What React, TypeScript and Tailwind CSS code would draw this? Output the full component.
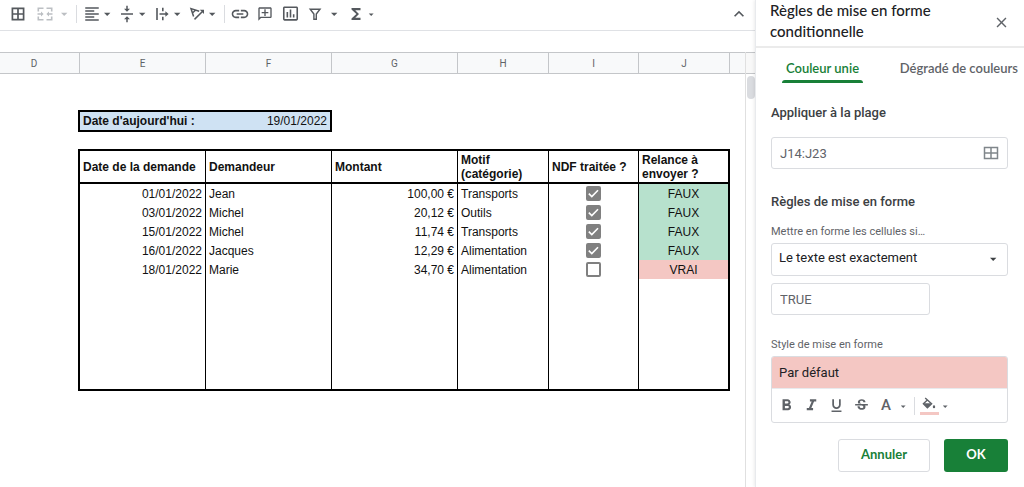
import { useState } from 'react'
import type { ReactNode } from 'react'
import {
  MdClose,
  MdFormatAlignLeft,
  MdFormatBold,
  MdFormatItalic,
  MdFormatUnderlined,
  MdFunctions,
  MdInsertChartOutlined,
  MdKeyboardArrowUp,
  MdLink,
  MdOutlineAddComment,
  MdStrikethroughS,
  MdVerticalAlignCenter,
} from 'react-icons/md'

interface Expense {
  date: string
  name: string
  amount: string
  category: string
  done: boolean
  remind: boolean
}

const EXPENSES: Expense[] = [
  { date: '01/01/2022', name: 'Jean', amount: '100,00 €', category: 'Transports', done: true, remind: false },
  { date: '03/01/2022', name: 'Michel', amount: '20,12 €', category: 'Outils', done: true, remind: false },
  { date: '15/01/2022', name: 'Michel', amount: '11,74 €', category: 'Transports', done: true, remind: false },
  { date: '16/01/2022', name: 'Jacques', amount: '12,29 €', category: 'Alimentation', done: true, remind: false },
  { date: '18/01/2022', name: 'Marie', amount: '34,70 €', category: 'Alimentation', done: false, remind: true },
]

const COLUMNS = [
  { letter: 'D', className: 'w-[80px] pr-[11px]' },
  { letter: 'E', className: 'w-[126px]' },
  { letter: 'F', className: 'w-[126px]' },
  { letter: 'G', className: 'w-[126px]' },
  { letter: 'H', className: 'w-[91px]' },
  { letter: 'I', className: 'w-[90px]' },
  { letter: 'J', className: 'w-[91px]' },
]

function Caret({ className = '' }: { className?: string }) {
  return (
    <svg viewBox="0 0 12 12" className={`h-3 w-3 shrink-0 ${className}`} fill="currentColor">
      <path d="M3 4.7h6.4L6.2 8z" />
    </svg>
  )
}

function SmallCaret() {
  return (
    <svg viewBox="0 0 12 12" className="h-3 w-3 shrink-0" fill="currentColor">
      <path d="M3.8 5.6h4.8L6.2 8.1z" />
    </svg>
  )
}

function GridIcon({ className = '' }: { className?: string }) {
  return (
    <svg viewBox="0 0 18 18" className={className} fill="none" stroke="currentColor" strokeWidth="1.7">
      <path d="M3.4 3.4h11.2v11.2H3.4zM9 3.4v11.2M3.4 9h11.2" />
    </svg>
  )
}

function RangeIcon() {
  return (
    <svg viewBox="0 0 20 20" className="h-5 w-5" fill="none" stroke="currentColor" strokeWidth="1.5">
      <path d="M3.5 4.5h13v11h-13zM10 4.5v11M3.5 10h13" />
    </svg>
  )
}

function MergeIcon() {
  return (
    <svg viewBox="0 0 18 18" className="h-[18px] w-[18px]" fill="none" stroke="currentColor" strokeWidth="1.6">
      <path d="M2.3 6.4V3.3H7.5M10.5 3.3h5.2V6.4M2.3 11.6v3.1H7.5M10.5 14.7h5.2V11.6" />
      <path d="M1.5 9h4.5M16.5 9H12" />
      <path d="M5 6.6 7.6 9 5 11.4zM13 6.6 10.4 9l2.6 2.4z" fill="currentColor" stroke="none" />
    </svg>
  )
}

function WrapIcon() {
  return (
    <svg viewBox="0 0 18 18" className="h-[18px] w-[18px]" fill="none" stroke="currentColor" strokeWidth="1.6">
      <path d="M4 3v12M9.8 2.8v3.4M9.8 11.8v3.4M6.5 9h7.5" />
      <path d="M12.4 6.2 15.6 9l-3.2 2.8z" fill="currentColor" stroke="none" />
    </svg>
  )
}

function RotateIcon() {
  return (
    <svg viewBox="0 0 18 18" className="h-[18px] w-[18px]" fill="none" stroke="currentColor" strokeWidth="1.5">
      <path d="M5.6 11.4 3 3.6l8.2 2.6M4.4 8 7.8 5" />
      <path d="M6.5 14.4 14.2 6.8" />
      <path d="M11.8 4.8h4.2V9z" fill="currentColor" stroke="none" />
    </svg>
  )
}

function FilterIcon() {
  return (
    <svg viewBox="0 0 18 18" className="h-[18px] w-[18px]" fill="none" stroke="currentColor" strokeWidth="1.4">
      <path d="M4.2 4.2h9.8L10.3 9v5.2H7.9V9z" />
    </svg>
  )
}

function FillIcon() {
  return (
    <svg viewBox="0 0 18 14" className="h-[14px] w-[18px]">
      <path d="M5.2 1 11.6 6.8 7.4 10.8 3.4 6.8 7.4 3" fill="none" stroke="currentColor" strokeWidth="1.4" />
      <path d="M3.2 6.2h8.6l-4.4 4.8z" fill="currentColor" />
      <path d="M14 7.8c.8 1 1.2 1.6 1.2 2.2a1.2 1.2 0 0 1-2.4 0c0-.6.4-1.2 1.2-2.2z" fill="currentColor" />
    </svg>
  )
}

function ToolButton({ label, children, className = '' }: { label: string; children: ReactNode; className?: string }) {
  return (
    <button type="button" aria-label={label} className={`flex shrink-0 items-center justify-center ${className}`}>
      {children}
    </button>
  )
}

function Toolbar() {
  return (
    <div className="flex h-[31px] items-center border-b border-[#dfe1e5] pb-[3px] pl-[9px] pr-[6px] text-[#54585d]">
      <ToolButton label="Bordures"><GridIcon className="h-[18px] w-[18px]" /></ToolButton>
      <ToolButton label="Fusionner" className="ml-[9px] gap-1 text-[#bcbfc3]"><MergeIcon /><Caret /></ToolButton>
      <span className="mx-[6px] h-[18px] w-px bg-[#dadce0]" />
      <div className="flex gap-[5px]">
        <ToolButton label="Alignement horizontal" className="w-[30px]"><MdFormatAlignLeft size={18} /><Caret /></ToolButton>
        <ToolButton label="Alignement vertical" className="w-[30px]"><MdVerticalAlignCenter size={18} /><Caret /></ToolButton>
        <ToolButton label="Retour à la ligne" className="w-[30px]"><WrapIcon /><Caret /></ToolButton>
        <ToolButton label="Rotation du texte" className="w-[30px]"><RotateIcon /><Caret /></ToolButton>
      </div>
      <span className="mx-[6px] h-[18px] w-px bg-[#dadce0]" />
      <div className="flex gap-[7px]">
        <ToolButton label="Lien" className="w-[18px]"><MdLink size={20} className="shrink-0" /></ToolButton>
        <ToolButton label="Commentaire" className="w-[18px]"><MdOutlineAddComment size={16} className="-scale-x-100" /></ToolButton>
        <ToolButton label="Graphique" className="w-[18px]"><MdInsertChartOutlined size={19} className="shrink-0" /></ToolButton>
        <ToolButton label="Filtre" className="gap-1"><FilterIcon /><Caret /></ToolButton>
        <ToolButton label="Fonctions" className="w-[30px]"><MdFunctions size={18} className="shrink-0" /><SmallCaret /></ToolButton>
      </div>
      <ToolButton label="Masquer les menus" className="ml-auto"><MdKeyboardArrowUp size={20} /></ToolButton>
    </div>
  )
}

function TickBox({ label, initial }: { label: string; initial: boolean }) {
  const [checked, setChecked] = useState(initial)
  return (
    <span className="relative mx-auto block h-[15px] w-[15px]">
      <input
        type="checkbox"
        aria-label={label}
        checked={checked}
        onChange={e => setChecked(e.target.checked)}
        className="block h-[15px] w-[15px] appearance-none rounded-[2px] border-2 border-[#808080] bg-white checked:bg-[#808080]"
      />
      {checked && (
        <svg viewBox="0 0 15 15" className="pointer-events-none absolute inset-0" fill="none" stroke="#fff" strokeWidth="1.6">
          <path d="m2.8 7.6 3 3 6.2-6.4" />
        </svg>
      )}
    </span>
  )
}

function Sheet() {
  const cell = 'h-[19px] border-r border-black px-[3px]'
  const head = 'h-[33px] border-r border-b-2 border-black px-[3px] text-left align-middle'
  return (
    <div className="flex flex-1">
      <div className="min-w-0 flex-1 overflow-hidden border-r border-[#e0e0e0]">
        <div className="flex h-[22px] border-y border-[#c4c6c9] bg-[#f8f9fa] font-['Roboto',sans-serif] text-[10px] text-[#5f6368]">
          {COLUMNS.map(col => (
            <div key={col.letter} className={`flex shrink-0 items-center justify-center border-r border-[#c4c6c9] ${col.className}`}>
              {col.letter}
            </div>
          ))}
        </div>
        <div className="pl-[78px] pt-9 font-['Liberation_Sans',Arial,sans-serif] text-xs leading-[14px] text-[#111]">
          <div className="flex h-[22px] w-[254px] items-center justify-between border-2 border-black bg-[#cfe2f3] px-[3px]">
            <span className="font-bold">Date d'aujourd'hui :</span>
            <span>19/01/2022</span>
          </div>
          <table className="mt-[17px] w-[652px] table-fixed border-separate border-spacing-0 border-2 border-black">
            <colgroup>
              <col className="w-[126px]" />
              <col className="w-[126px]" />
              <col className="w-[126px]" />
              <col className="w-[91px]" />
              <col className="w-[90px]" />
              <col className="w-[89px]" />
            </colgroup>
            <thead>
              <tr>
                <th className={head}>Date de la demande</th>
                <th className={head}>Demandeur</th>
                <th className={head}>Montant</th>
                <th className={head}>Motif<br />(catégorie)</th>
                <th className={head}>NDF traitée ?</th>
                <th className="h-[33px] border-b-2 border-black px-[3px] text-left">Relance à<br />envoyer ?</th>
              </tr>
            </thead>
            <tbody>
              {EXPENSES.map(row => (
                <tr key={row.date}>
                  <td className={`${cell} text-right`}>{row.date}</td>
                  <td className={cell}>{row.name}</td>
                  <td className={`${cell} text-right`}>{row.amount}</td>
                  <td className={cell}>{row.category}</td>
                  <td className={cell}><TickBox label={`NDF traitée, ${row.name}, ${row.date}`} initial={row.done} /></td>
                  <td className={`h-[19px] text-center ${row.remind ? 'bg-[#f4c7c3]' : 'bg-[#b7e1cd]'}`}>
                    {row.remind ? 'VRAI' : 'FAUX'}
                  </td>
                </tr>
              ))}
              <tr className="h-[110px]">
                <td className={cell} />
                <td className={cell} />
                <td className={cell} />
                <td className={cell} />
                <td className={cell} />
                <td />
              </tr>
            </tbody>
          </table>
        </div>
      </div>
      <div className="w-[9px] shrink-0">
        <div className="h-[22px] border-y border-[#c4c6c9] bg-[#f8f8f8]" />
        <div className="ml-px mt-[2px] h-[23px] rounded-full bg-[#dadce0]" />
      </div>
    </div>
  )
}

function RulesPanel() {
  const [range, setRange] = useState('J14:J23')
  const [value, setValue] = useState('TRUE')
  const field = 'w-full rounded-[3px] border border-[#dadce0] bg-white outline-none'

  return (
    <aside className="w-[269px] shrink-0 border-l border-[#e8eaed] bg-white font-['Roboto',sans-serif] text-[13px] text-[#3c4043] shadow-[-1px_0_3px_rgba(0,0,0,0.08)]">
      <header className="flex h-[48px] items-start justify-between border-b-2 border-[#ebebeb] pl-[14px] pr-[14px]">
        <h2 className="font-['Lato',sans-serif] text-[15px] font-medium leading-[21px] text-[#202124]">
          Règles de mise en forme conditionnelle
        </h2>
        <button type="button" aria-label="Fermer" className="mt-[14px] text-[#5f6368]"><MdClose size={17} /></button>
      </header>

      <div className="flex h-[35px] justify-between pl-[26px] pr-[6px] font-['Lato',sans-serif] font-semibold">
        <button type="button" className="flex flex-col justify-between whitespace-nowrap text-[#188038]">
          <span className="px-1 pt-[11px] leading-[18px]">Couleur unie</span>
          <span className="h-[3px] w-full rounded-t-[3px] bg-[#188038]" />
        </button>
        <button type="button" className="flex whitespace-nowrap pt-[11px] leading-[18px] text-[#5f6368]">Dégradé de couleurs</button>
      </div>

      <form className="pl-[15px] pr-4 pt-[21px]" onSubmit={e => e.preventDefault()}>
        <label htmlFor="range" className="block font-medium leading-[18px]">Appliquer à la plage</label>
        <div className="relative mt-[15px]">
          <input id="range" value={range} onChange={e => setRange(e.target.value)} className={`${field} h-[32px] px-2 text-[#5f6368]`} />
          <button type="button" aria-label="Sélectionner une plage" className="absolute right-[7px] top-[6px] text-[#80868b]">
            <RangeIcon />
          </button>
        </div>

        <h3 className="mt-[24px] font-medium leading-[18px]">Règles de mise en forme</h3>
        <label htmlFor="condition" className="mt-[13px] block text-[11px] leading-4 text-[#5f6368]">Mettre en forme les cellules si…</label>
        <div className="relative mt-[3px]">
          <select id="condition" className={`${field} h-[33px] appearance-none px-[7px] pb-1 text-[#202124]`}>
            <option>Le texte est exactement</option>
          </select>
          <Caret className="pointer-events-none absolute right-[9px] top-[10px]" />
        </div>
        <input
          aria-label="Valeur"
          value={value}
          onChange={e => setValue(e.target.value)}
          className="mt-[7px] block h-[32px] w-[159px] rounded-[3px] border border-[#dadce0] px-2 text-[#5f6368] outline-none"
        />

        <p className="mt-[22px] text-[11px] leading-4 text-[#5f6368]">Style de mise en forme</p>
        <div className="mt-[3px] overflow-hidden rounded-[3px] border border-[#dadce0]">
          <button type="button" className="block h-[31px] w-full bg-[#f4c7c3] px-[7px] text-left text-[#202124]">Par défaut</button>
          <div className="flex h-[34px] items-center border-t border-[#e8eaed] pl-[5px] text-[#5f6368]">
            <div className="flex gap-[7px]">
              <ToolButton label="Gras" className="w-[18px]"><MdFormatBold size={19} className="shrink-0" /></ToolButton>
              <ToolButton label="Italique" className="w-[18px]"><MdFormatItalic size={19} className="shrink-0" /></ToolButton>
              <ToolButton label="Souligné" className="w-[18px]"><MdFormatUnderlined size={17} /></ToolButton>
              <ToolButton label="Barré" className="w-[18px]"><MdStrikethroughS size={17} /></ToolButton>
              <ToolButton label="Couleur du texte" className="gap-[2px]">
                <span className="w-[18px] pb-[2px] text-[15px] font-medium leading-4">A</span>
                <SmallCaret />
              </ToolButton>
            </div>
            <span className="mx-[5px] h-[18px] w-px bg-[#dadce0]" />
            <ToolButton label="Couleur de remplissage">
              <span className="flex flex-col gap-px">
                <FillIcon />
                <span className="h-[3px] w-[19px] bg-[#f4c7c3]" />
              </span>
              <SmallCaret />
            </ToolButton>
          </div>
        </div>

        <div className="mt-4 flex justify-end gap-[14px] font-['Lato',sans-serif] font-bold">
          <button type="button" className="h-[33px] w-[92px] rounded-[3px] border border-[#dadce0] pb-[2px] text-[#188038]">Annuler</button>
          <button type="submit" className="h-[33px] w-[64px] rounded-[3px] bg-[#188038] pb-[2px] text-white">OK</button>
        </div>
      </form>
    </aside>
  )
}

export default function App() {
  return (
    <div className="flex min-h-screen bg-white">
      <main className="flex min-w-0 flex-1 flex-col">
        <Toolbar />
        <div className="h-[21px]" />
        <Sheet />
      </main>
      <RulesPanel />
    </div>
  )
}
